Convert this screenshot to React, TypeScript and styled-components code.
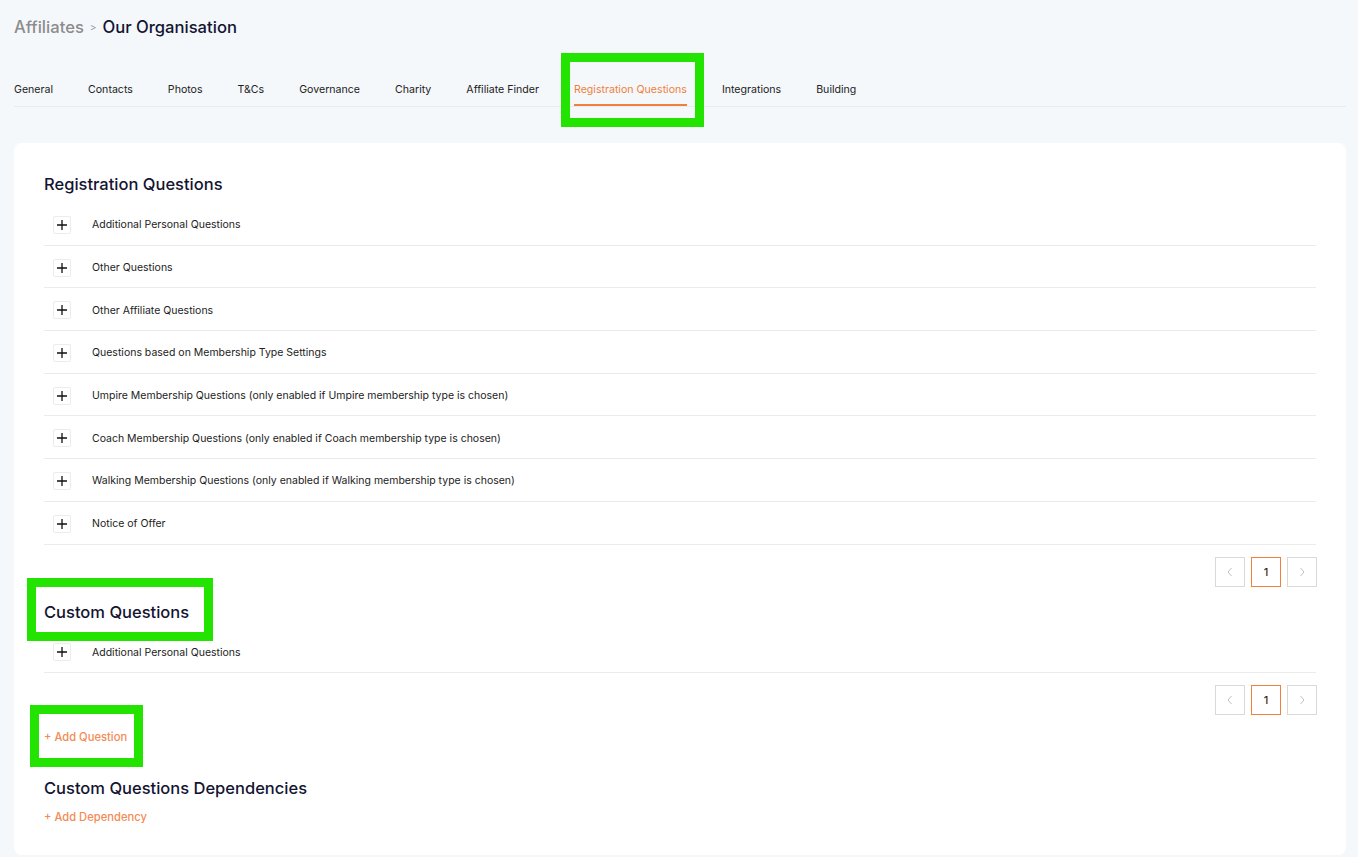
import React from "react";
import styled, { createGlobalStyle } from "styled-components";

const Global = createGlobalStyle`
  html, body { margin: 0; padding: 0; background: #f5f8fb; }
  body { font-family: Inter, "Noto Sans", sans-serif; color: #1f1f33; }
  * { box-sizing: border-box; }
`;

const Page = styled.div`
  position: relative;
  padding: 0 12px 4px 14px;
  min-height: 857px;
`;

const Breadcrumb = styled.div`
  display: flex;
  align-items: center;
  height: 54px;
  font-size: 16.6px;
  gap: 6px;
`;
const Crumb = styled.span<{ $current?: boolean }>`
  color: ${(p) => (p.$current ? "#141432" : "#8c8c8c")};
  font-weight: 500;
`;
const Sep = styled.span`
  color: #9a9a9a;
  font-size: 10px;
`;

const Tabs = styled.nav`
  display: flex;
  gap: 35px;
  margin-top: 15px;
  border-bottom: 1px solid #e9ecef;
  height: 38px;
`;
const Tab = styled.div<{ $active?: boolean }>`
  font-size: 10.6px;
  color: ${(p) => (p.$active ? "#f0803c" : "#222")};
  display: flex;
  align-items: center;
  height: 100%;
  padding-top: 3px;
  position: relative;
  &::after {
    content: "";
    display: ${(p) => (p.$active ? "block" : "none")};
    position: absolute;
    left: 0;
    right: 0;
    bottom: 0;
    height: 2px;
    background: #f0803c;
  }
`;

const Card = styled.section`
  background: #fff;
  border-radius: 8px;
  margin-top: 36px;
  padding: 29px 30px 30px 30px;
`;

const Title = styled.h2<{ $mt?: number }>`
  margin: ${(p) => p.$mt ?? 0}px 0 7px 0;
  font-size: 16.5px;
  line-height: 24px;
  font-weight: 500;
  color: #141432;
`;

const List = styled.div`
  display: flex;
  flex-direction: column;
`;
const Row = styled.div`
  display: flex;
  align-items: center;
  height: 42.7px;
  padding-top: 2px;
  border-bottom: 1px solid #ebebeb;
  font-size: 10.5px;
  color: #222;
`;
const PlusBox = styled.span`
  width: 18px;
  height: 18px;
  margin-left: 9px;
  margin-right: 21px;
  border: 1px solid #ececec;
  border-radius: 2px;
  display: flex;
  align-items: center;
  justify-content: center;
  color: #111;
`;

const Pager = styled.div`
  display: flex;
  justify-content: flex-end;
  gap: 6px;
  margin-top: 12px;
  margin-right: -1px;
`;
const PageBtn = styled.div<{ $active?: boolean }>`
  width: 30px;
  height: 30px;
  border: 1px solid ${(p) => (p.$active ? "#f0803c" : "#d9d9d9")};
  display: flex;
  align-items: center;
  justify-content: center;
  font-size: 11px;
  font-weight: 500;
  color: ${(p) => (p.$active ? "#3a2a20" : "#c4c4c4")};
  background: #fff;
`;

const AddLink = styled.div<{ $mt: number }>`
  margin-top: ${(p) => p.$mt}px;
  font-size: 11.2px;
  line-height: 16px;
  color: #f38b55;
  font-weight: 500;
`;

const Highlight = styled.div`
  position: absolute;
  border: 9px solid #22e400;
  pointer-events: none;
`;

const Plus = () => (
  <svg width="12" height="12" viewBox="0 0 12 12">
    <path d="M6 1v10M1 6h10" stroke="#111" strokeWidth="1.3" />
  </svg>
);

const Chevron = ({ dir }: { dir: "l" | "r" }) => (
  <svg width="8" height="10" viewBox="0 0 8 10">
    <path
      d={dir === "l" ? "M5.5 1L2 5l3.5 4" : "M2.5 1L6 5 2.5 9"}
      stroke="#bfbfbf"
      strokeWidth="1"
      fill="none"
    />
  </svg>
);

const tabs = [
  "General",
  "Contacts",
  "Photos",
  "T&Cs",
  "Governance",
  "Charity",
  "Affiliate Finder",
  "Registration Questions",
  "Integrations",
  "Building",
];

const regRows = [
  "Additional Personal Questions",
  "Other Questions",
  "Other Affiliate Questions",
  "Questions based on Membership Type Settings",
  "Umpire Membership Questions (only enabled if Umpire membership type is chosen)",
  "Coach Membership Questions (only enabled if Coach membership type is chosen)",
  "Walking Membership Questions (only enabled if Walking membership type is chosen)",
  "Notice of Offer",
];

const Pagination = () => (
  <Pager>
    <PageBtn>
      <Chevron dir="l" />
    </PageBtn>
    <PageBtn $active>1</PageBtn>
    <PageBtn>
      <Chevron dir="r" />
    </PageBtn>
  </Pager>
);

export default function App() {
  return (
    <Page>
      <Global />
      <Breadcrumb>
        <Crumb>Affiliates</Crumb>
        <Sep>&gt;</Sep>
        <Crumb $current>Our Organisation</Crumb>
      </Breadcrumb>
      <Tabs>
        {tabs.map((t) => (
          <Tab key={t} $active={t === "Registration Questions"}>
            {t}
          </Tab>
        ))}
      </Tabs>
      <Card>
        <Title>Registration Questions</Title>
        <List>
          {regRows.map((r) => (
            <Row key={r}>
              <PlusBox>
                <Plus />
              </PlusBox>
              {r}
            </Row>
          ))}
        </List>
        <Pagination />
        <Title $mt={13}>Custom Questions</Title>
        <List>
          <Row>
            <PlusBox>
              <Plus />
            </PlusBox>
            Additional Personal Questions
          </Row>
        </List>
        <Pagination />
        <AddLink $mt={14}>+ Add Question</AddLink>
        <Title $mt={31}>Custom Questions Dependencies</Title>
        <AddLink $mt={9}>+ Add Dependency</AddLink>
      </Card>
      <Highlight style={{ left: 561, top: 53, width: 143, height: 74 }} />
      <Highlight style={{ left: 27, top: 578, width: 186, height: 63 }} />
      <Highlight style={{ left: 30, top: 705, width: 113, height: 62 }} />
    </Page>
  );
}
